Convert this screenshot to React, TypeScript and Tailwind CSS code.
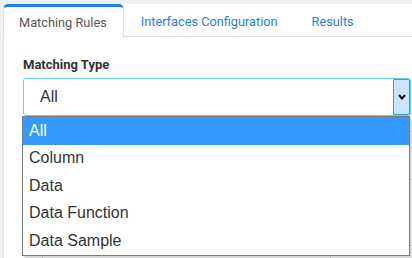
const tabs = [
  { label: 'Matching Rules', active: true },
  { label: 'Interfaces Configuration', active: false },
  { label: 'Results', active: false },
]

const options = ['All', 'Column', 'Data', 'Data Function', 'Data Sample']

export default function App() {
  return (
    <div className="h-[258px] w-[412px] overflow-hidden bg-[#eef0f3] pt-[4px] pl-[3px] font-['Roboto',sans-serif]">
      <div className="relative h-[254px] border-l border-[#e6e8eb] bg-white">
        {/* Tab bar */}
        <div className="flex h-[33px] border-b border-[#dee2e6]">
          {tabs.map((tab) =>
            tab.active ? (
              <div
                key={tab.label}
                className="-ml-px -mb-px flex h-[34px] items-center rounded-t-[5px] border-x border-t-[3px] border-x-[#dee2e6] border-t-[#1f7fe6] bg-white pl-[15px] pr-[16px] text-[12.75px] text-[#555]"
              >
                {tab.label}
              </div>
            ) : (
              <div
                key={tab.label}
                className="flex h-[33px] items-center pt-[3px] pl-[17px] pr-[17px] text-[12.75px] text-[#1f7fe6]"
              >
                {tab.label}
              </div>
            )
          )}
        </div>

        {/* Form */}
        <div className="pl-[19px] pt-[20px]">
          <div className="text-[13px] font-bold leading-[16px] text-[#333]">Matching Type</div>
          <div className="mt-[5px] flex h-[38px] w-[388px] items-center rounded-[3px] border border-[#62d0e8] pl-[16px] font-['Liberation_Sans',Arial,sans-serif] text-[16px] text-[#333]">
            <span className="flex-1">All</span>
            <div className="flex h-[36px] w-[17px] items-center justify-center rounded-r-[2px] border border-[#3d9be0] bg-[#cce4f7]">
              <svg width="8" height="6" viewBox="0 0 8 6">
                <polyline points="1,1 4,4.5 7,1" fill="none" stroke="#111" strokeWidth="2" />
              </svg>
            </div>
          </div>

          {/* Table under the open list */}
          <div className="mt-[15px] w-[392px] border-t border-[#eceef0]">
            <div className="flex h-[48px] border-b border-[#dfe2e5]">
              <div className="w-[20px] border-r border-[#dfe2e5]" />
              <div className="w-[288px] border-r border-[#dfe2e5]" />
              <div className="flex-1" />
            </div>
            <div className="flex h-[66px] border-b border-[#dfe2e5]">
              <div className="w-[20px] border-r border-[#dfe2e5]" />
              <div className="w-[288px] border-r border-[#dfe2e5]" />
              <div className="flex-1" />
            </div>
            <div className="flex h-[40px]">
              <div className="w-[20px] border-r border-[#dfe2e5]" />
              <div className="w-[288px] border-r border-[#dfe2e5]" />
              <div className="flex-1" />
            </div>
          </div>
        </div>

        {/* Open select list */}
        <div className="absolute top-[112px] left-[18px] w-[388px] border border-[#7a7a7a] bg-white font-['Liberation_Sans',Arial,sans-serif] text-[16px] shadow-[2px_2px_2px_rgba(0,0,0,0.18)]">
          {options.map((opt, i) => (
            <div
              key={opt}
              className={
                i === 0
                  ? 'flex h-[27.5px] items-center bg-[#3399ff] pl-[6px] text-white'
                  : 'flex h-[27.5px] items-center pl-[6px] text-[#333]'
              }
            >
              {opt}
            </div>
          ))}
        </div>
      </div>
    </div>
  )
}
